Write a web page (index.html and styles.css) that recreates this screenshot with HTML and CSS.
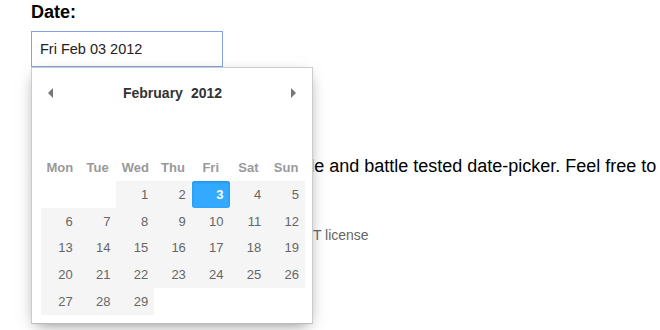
FILE: index.html
```html
<!DOCTYPE html>
<html lang="en">
<head>
    <meta charset="UTF-8">
    <meta name="viewport" content="width=device-width, initial-scale=1.0">
    <title>Pikaday</title>
    <link rel="stylesheet" href="styles.css">
</head>
<body>
    <div class="page">
        <label for="datepicker" class="date-label">Date:</label>
        <div class="field">
            <input type="text" id="datepicker" class="date-input" value="Fri Feb 03 2012">

            <div class="pika-single">
                <div class="pika-title">
                    <span class="pika-prev"></span>
                    <div class="pika-label">February</div>
                    <div class="pika-label">2012</div>
                    <span class="pika-next"></span>
                </div>
                <div class="pika-spacer"></div>
                <div class="pika-table">
                    <div class="pika-head">Mon</div>
                    <div class="pika-head">Tue</div>
                    <div class="pika-head">Wed</div>
                    <div class="pika-head">Thu</div>
                    <div class="pika-head">Fri</div>
                    <div class="pika-head">Sat</div>
                    <div class="pika-head">Sun</div>

                    <div class="pika-empty"></div>
                    <div class="pika-empty"></div>
                    <div class="pika-day">1</div>
                    <div class="pika-day">2</div>
                    <div class="pika-day is-selected">3</div>
                    <div class="pika-day">4</div>
                    <div class="pika-day">5</div>

                    <div class="pika-day">6</div>
                    <div class="pika-day">7</div>
                    <div class="pika-day">8</div>
                    <div class="pika-day">9</div>
                    <div class="pika-day">10</div>
                    <div class="pika-day">11</div>
                    <div class="pika-day">12</div>

                    <div class="pika-day">13</div>
                    <div class="pika-day">14</div>
                    <div class="pika-day">15</div>
                    <div class="pika-day">16</div>
                    <div class="pika-day">17</div>
                    <div class="pika-day">18</div>
                    <div class="pika-day">19</div>

                    <div class="pika-day">20</div>
                    <div class="pika-day">21</div>
                    <div class="pika-day">22</div>
                    <div class="pika-day">23</div>
                    <div class="pika-day">24</div>
                    <div class="pika-day">25</div>
                    <div class="pika-day">26</div>

                    <div class="pika-day">27</div>
                    <div class="pika-day">28</div>
                    <div class="pika-day">29</div>
                </div>
            </div>
        </div>

        <p class="intro">A small, lightweight, modular, flexible and battle tested date-picker. Feel free to use it in your projects.</p>

        <p class="footnote">Copyright &copy; 2012 David Bushell &mdash; BSD &amp; MIT license</p>
    </div>
</body>
</html>
```

FILE: styles.css
```css
body {
    font-family: "Liberation Sans", Arial, sans-serif;
    background-color: #fff;
    color: #000;
    margin: 0;
    padding: 0;
}

.page {
    min-height: 330px;
    box-sizing: border-box;
    padding: 2px 0 0 31px;
}

.date-label {
    display: block;
    font-size: 18px;
    font-weight: bold;
    line-height: 20px;
    margin-bottom: 9px;
}

.field {
    position: relative;
    width: 192px;
}

.date-input {
    display: block;
    width: 192px;
    height: 36px;
    margin: 0;
    padding: 0 8px;
    border: 1px solid #82a5e2;
    box-sizing: border-box;
    font-family: inherit;
    font-size: 14.5px;
    color: #222;
    outline: none;
}

/* the calendar pops over the page text */
.pika-single {
    position: absolute;
    top: 100%;
    left: 0;
    width: 282px;
    height: 257px;
    box-sizing: border-box;
    background: #fff;
    border: 1px solid #ccc;
    border-bottom-color: #bbb;
    box-shadow: 0 5px 15px -5px rgba(0, 0, 0, 0.5);
    padding: 0 8px 0 9px;
    z-index: 10;
}

.pika-title {
    display: flex;
    align-items: center;
    justify-content: center;
    gap: 8px;
    height: 26px;
    margin-top: 12px;
    position: relative;
}

.pika-label {
    font-size: 14px;
    font-weight: bold;
    color: #333;
}

.pika-prev,
.pika-next {
    position: absolute;
    top: 8px;
    width: 0;
    height: 0;
    border-top: 5px solid transparent;
    border-bottom: 5px solid transparent;
}

.pika-prev {
    left: 7px;
    border-right: 5px solid #777;
}

.pika-next {
    right: 8px;
    border-left: 5px solid #777;
}

.pika-spacer {
    height: 48px;
}

.pika-table {
    display: grid;
    grid-template-columns: repeat(7, 1fr);
    grid-template-rows: 27px;
    grid-auto-rows: 26.8px;
    width: 264px;
}

.pika-head {
    font-size: 13px;
    font-weight: bold;
    color: #999;
    text-align: center;
    line-height: 27px;
}

.pika-day {
    background: #f5f5f5;
    color: #666;
    font-size: 13px;
    padding-right: 6px;
    display: flex;
    align-items: center;
    justify-content: flex-end;
}

.pika-day.is-selected {
    background: #33aaff;
    color: #fff;
    font-weight: bold;
    border-radius: 3px;
    box-shadow: inset 0 1px 3px #178fe5;
}

.intro {
    font-size: 18px;
    line-height: 22px;
    margin: 88px 0 0 0;
}

.footnote {
    font-size: 14px;
    color: #666;
    margin: 28px 0 0 0;
}
```
